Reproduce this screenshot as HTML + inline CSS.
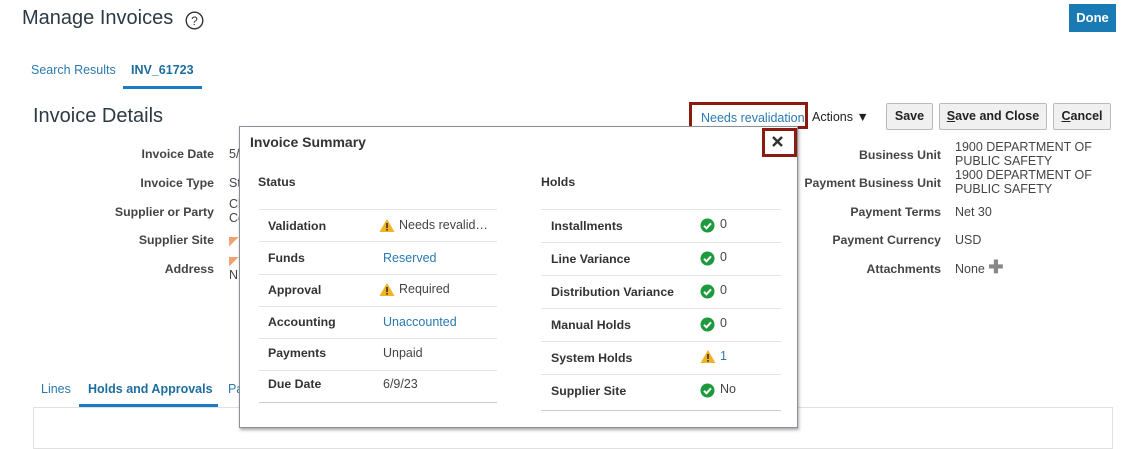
<!DOCTYPE html>
<html><head><style>
body{margin:0;width:1126px;height:433px;overflow:hidden;background:#fff;font-family:"Liberation Sans",sans-serif;position:relative;color:#333}
.a{position:absolute;white-space:nowrap}
.lbl{font-weight:bold;font-size:12.3px;color:#444;text-align:right}
.val{font-size:12.5px;color:#444}
.btn{position:absolute;height:25px;border:1px solid #bbb;background:#f0f0f0;font-weight:bold;font-size:12.5px;color:#222;text-align:center;line-height:25px;border-radius:2px}
.ln{position:absolute;height:1px;background:#e4e4e4}
.pl{position:absolute;font-weight:bold;font-size:12.3px;color:#333}
.pv{position:absolute;font-size:12.5px;color:#444}
.lk{color:#2a7ab0}
</style></head><body>
<div class="a" style="left:22px;top:7px;font-size:20px;color:#2b3a44">Manage Invoices</div>
<svg class="a" style="left:185px;top:11px" width="19" height="19"><circle cx="9.5" cy="9.5" r="8.3" fill="none" stroke="#333" stroke-width="1.4"/><text x="9.5" y="14" font-size="12" text-anchor="middle" font-family="Liberation Sans" fill="#333">?</text></svg>
<div class="a" style="left:1069px;top:4px;width:47px;height:28px;background:#1a7bb4;color:#fff;font-weight:bold;font-size:13px;text-align:center;line-height:28px">Done</div>
<div class="a" style="left:31px;top:63px;font-size:12.5px;color:#2a7ab0">Search Results</div>
<div class="a" style="left:131px;top:63px;font-size:12.5px;font-weight:bold;color:#1d6d9f">INV_61723</div>
<div class="a" style="left:123px;top:86px;width:79px;height:3px;background:#1a7bc0"></div>
<div class="a" style="left:33px;top:105px;font-size:20px;color:#2b3a44">Invoice Details</div>

<div class="a lbl" style="right:912px;top:147px">Invoice Date</div>
<div class="a lbl" style="right:912px;top:176px">Invoice Type</div>
<div class="a lbl" style="right:912px;top:205px">Supplier or Party</div>
<div class="a lbl" style="right:912px;top:233px">Supplier Site</div>
<div class="a lbl" style="right:912px;top:262px">Address</div>
<div class="a val" style="left:229px;top:147px">5/</div>
<div class="a val" style="left:229px;top:176px">St</div>
<div class="a val" style="left:229px;top:197px;line-height:14px">Cl<br>Co</div>
<div class="a val" style="left:229px;top:233px"><span style="color:#f4a070">◤</span>F</div>
<div class="a val" style="left:229px;top:254px;line-height:14px"><span style="color:#f4a070">◤</span>2<br>N</div>

<div class="a" style="left:701px;top:111px;font-size:12.5px;color:#2a7ab0">Needs revalidation</div>
<div class="a" style="left:689px;top:102px;width:113px;height:21px;border:3px solid #8b1a10"></div>
<div class="a" style="left:812px;top:110px;font-size:12.5px;color:#222">Actions ▼</div>
<div class="btn" style="left:886px;top:103px;width:45px">Save</div>
<div class="btn" style="left:939px;top:103px;width:106px"><u>S</u>ave and Close</div>
<div class="btn" style="left:1053px;top:103px;width:56px"><u>C</u>ancel</div>

<div class="a lbl" style="right:185px;top:148px">Business Unit</div>
<div class="a lbl" style="right:185px;top:176px">Payment Business Unit</div>
<div class="a lbl" style="right:185px;top:205px">Payment Terms</div>
<div class="a lbl" style="right:185px;top:233px">Payment Currency</div>
<div class="a lbl" style="right:185px;top:262px">Attachments</div>
<div class="a val" style="left:955px;top:140px;line-height:14px">1900 DEPARTMENT OF<br>PUBLIC SAFETY</div>
<div class="a val" style="left:955px;top:168px;line-height:14px">1900 DEPARTMENT OF<br>PUBLIC SAFETY</div>
<div class="a val" style="left:955px;top:205px">Net 30</div>
<div class="a val" style="left:955px;top:233px">USD</div>
<div class="a val" style="left:955px;top:262px">None <span style="color:#888;font-weight:bold;font-size:18px;line-height:10px">✚</span></div>

<div class="a" style="left:41px;top:382px;font-size:12.5px;color:#2a7ab0">Lines</div>
<div class="a" style="left:88px;top:382px;font-size:12.5px;font-weight:bold;color:#1d6d9f">Holds and Approvals</div>
<div class="a" style="left:228px;top:382px;font-size:12.5px;color:#2a7ab0">Pa</div>
<div class="a" style="left:79px;top:404px;width:139px;height:3px;background:#1a7bc0"></div>
<div class="a" style="left:33px;top:407px;width:1078px;height:40px;border:1px solid #e0e0e0"></div>

<div class="a" style="left:239px;top:126px;width:557px;height:300px;background:#fff;border:1px solid #8a9096;box-shadow:1px 2px 3px rgba(0,0,0,.35)">
<div class="pl" style="left:10px;top:7px;font-size:14px">Invoice Summary</div>
<div class="pl" style="left:18px;top:48px">Status</div>
<div class="pl" style="left:301px;top:48px">Holds</div>
<div class="ln" style="left:19px;width:238px;top:82px"></div>
<div class="ln" style="left:19px;width:238px;top:114px"></div>
<div class="ln" style="left:19px;width:238px;top:147px"></div>
<div class="ln" style="left:19px;width:238px;top:179px"></div>
<div class="ln" style="left:19px;width:238px;top:211px"></div>
<div class="ln" style="left:19px;width:238px;top:243px"></div>
<div class="ln" style="left:19px;width:238px;top:275px;background:#ccc"></div>
<div class="pl" style="left:28px;top:92px">Validation</div>
<div class="pl" style="left:28px;top:124px">Funds</div>
<div class="pl" style="left:28px;top:156px">Approval</div>
<div class="pl" style="left:28px;top:188px">Accounting</div>
<div class="pl" style="left:28px;top:219px">Payments</div>
<div class="pl" style="left:28px;top:250px">Due Date</div>
<svg class="a" style="left:139px;top:91px" width="16" height="15"><path d="M8 1L15.5 14H.5Z" fill="#f0b323"/><rect x="7.2" y="5" width="1.6" height="5" fill="#333"/><rect x="7.2" y="11" width="1.6" height="1.6" fill="#333"/></svg>
<div class="pv" style="left:159px;top:91px">Needs revalid…</div>
<div class="pv lk" style="left:143px;top:124px">Reserved</div>
<svg class="a" style="left:139px;top:155px" width="16" height="15"><path d="M8 1L15.5 14H.5Z" fill="#f0b323"/><rect x="7.2" y="5" width="1.6" height="5" fill="#333"/><rect x="7.2" y="11" width="1.6" height="1.6" fill="#333"/></svg>
<div class="pv" style="left:159px;top:155px">Required</div>
<div class="pv lk" style="left:143px;top:188px">Unaccounted</div>
<div class="pv" style="left:143px;top:219px">Unpaid</div>
<div class="pv" style="left:143px;top:250px">6/9/23</div>

<div class="ln" style="left:301px;width:240px;top:82px"></div>
<div class="ln" style="left:301px;width:240px;top:115px"></div>
<div class="ln" style="left:301px;width:240px;top:148px"></div>
<div class="ln" style="left:301px;width:240px;top:181px"></div>
<div class="ln" style="left:301px;width:240px;top:214px"></div>
<div class="ln" style="left:301px;width:240px;top:247px"></div>
<div class="ln" style="left:301px;width:240px;top:283px;background:#ccc"></div>
<div class="pl" style="left:311px;top:92px">Installments</div>
<div class="pl" style="left:311px;top:125px">Line Variance</div>
<div class="pl" style="left:311px;top:158px">Distribution Variance</div>
<div class="pl" style="left:311px;top:191px">Manual Holds</div>
<div class="pl" style="left:311px;top:224px">System Holds</div>
<div class="pl" style="left:311px;top:257px">Supplier Site</div>

<svg class="a" style="left:460px;top:91px" width="15" height="15"><circle cx="7.5" cy="7.5" r="7" fill="#1d9a3d"/><path d="M4 7.8l2.5 2.5 4.5-5" fill="none" stroke="#fff" stroke-width="2"/></svg>
<div class="pv" style="left:480px;top:90px">0</div>
<svg class="a" style="left:460px;top:124px" width="15" height="15"><circle cx="7.5" cy="7.5" r="7" fill="#1d9a3d"/><path d="M4 7.8l2.5 2.5 4.5-5" fill="none" stroke="#fff" stroke-width="2"/></svg>
<div class="pv" style="left:480px;top:123px">0</div>
<svg class="a" style="left:460px;top:157px" width="15" height="15"><circle cx="7.5" cy="7.5" r="7" fill="#1d9a3d"/><path d="M4 7.8l2.5 2.5 4.5-5" fill="none" stroke="#fff" stroke-width="2"/></svg>
<div class="pv" style="left:480px;top:156px">0</div>
<svg class="a" style="left:460px;top:190px" width="15" height="15"><circle cx="7.5" cy="7.5" r="7" fill="#1d9a3d"/><path d="M4 7.8l2.5 2.5 4.5-5" fill="none" stroke="#fff" stroke-width="2"/></svg>
<div class="pv" style="left:480px;top:189px">0</div>
<svg class="a" style="left:460px;top:222px" width="16" height="15"><path d="M8 1L15.5 14H.5Z" fill="#f0b323"/><rect x="7.2" y="5" width="1.6" height="5" fill="#333"/><rect x="7.2" y="11" width="1.6" height="1.6" fill="#333"/></svg>
<div class="pv lk" style="left:480px;top:222px">1</div>
<svg class="a" style="left:460px;top:256px" width="15" height="15"><circle cx="7.5" cy="7.5" r="7" fill="#1d9a3d"/><path d="M4 7.8l2.5 2.5 4.5-5" fill="none" stroke="#fff" stroke-width="2"/></svg>
<div class="pv" style="left:480px;top:255px">No</div>
</div>
<div class="a" style="left:762px;top:128px;width:29px;height:23px;border:3px solid #8b1a10;background:#fff"></div>
<svg class="a" style="left:771px;top:135px" width="13" height="13"><path d="M2 2L11 11M11 2L2 11" stroke="#333" stroke-width="2.4"/></svg>
</body></html>
